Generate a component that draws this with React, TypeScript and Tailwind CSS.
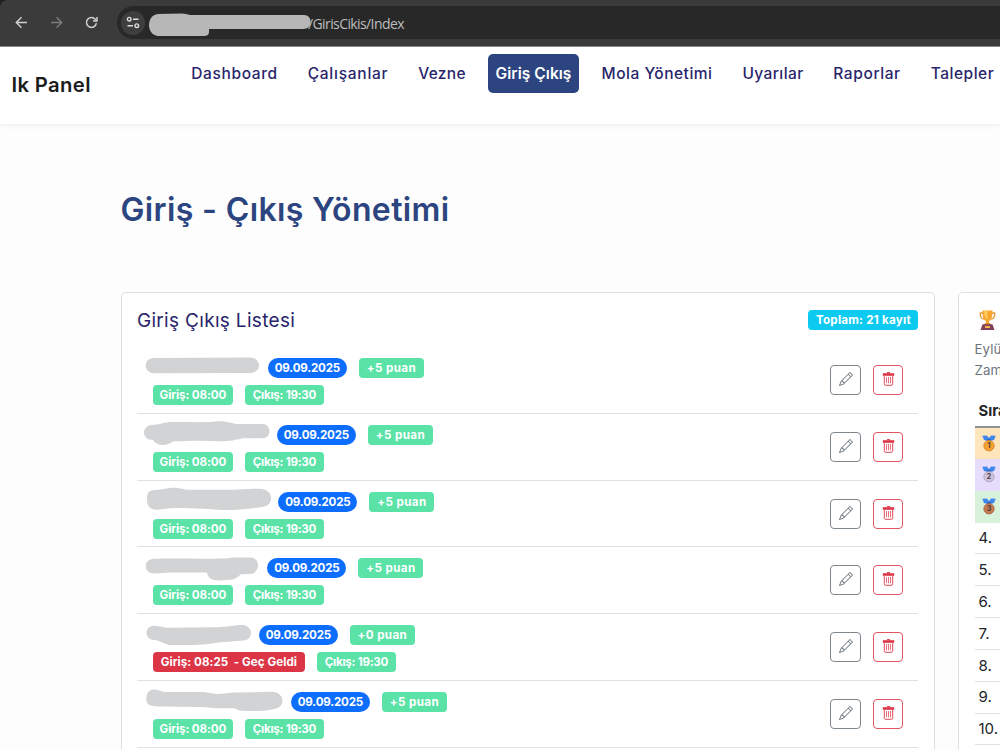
import React from "react";
import { BsPencil } from "react-icons/bs";

type Entry = {
  blob: string;
  nameWidth: string;
  points: string;
  late?: boolean;
};

const navItems = [
  { label: "Dashboard", cls: "w-[102px] tracking-[0.65px]" },
  { label: "Çalışanlar", cls: "w-[96px] tracking-[0.75px]" },
  { label: "Vezne", cls: "w-[63px] tracking-[0.3px]" },
  { label: "Giriş Çıkış", cls: "w-[91px] bg-[#2c4580] text-white !font-semibold tracking-[0.05px]", active: true },
  { label: "Mola Yönetimi", cls: "w-[127px] tracking-[0.5px]" },
  { label: "Uyarılar", cls: "w-[76px] tracking-[0.4px]" },
  { label: "Raporlar", cls: "w-[83px] tracking-[0.6px]" },
  { label: "Talepler", cls: "w-[79px] tracking-[0.5px]" },
];

const entries: Entry[] = [
  {
    nameWidth: "w-[131px]",
    points: "+5 puan",
    blob: "M17 4 L113 3.5 C125 3.5 125 19 113 19 L17 19.2 C6 19.2 6 4 17 4Z",
  },
  {
    nameWidth: "w-[140px]",
    points: "+5 puan",
    blob: "M16 4.7 C24 5 26 2 36 2 C50 1.5 66 3 80 1.3 C91 1 95 4 100 4 L125 4 C135 4 135 18.3 125 18.3 L106 18.3 C95 21 89 21.3 83 21.3 C65 20 50 21 36 21.3 C29 27 20 26 16 20 C4 20 4 5 16 4.7Z",
  },
  {
    nameWidth: "w-[141.5px]",
    points: "+5 puan",
    blob: "M18 3 C26 3 30 .8 38 .8 C44 1 46 2.7 52 2.7 L93 2.7 C104 2.5 110 1.7 123 1.7 C137 2 138 19 125 20 C116 21 106 23 93 23 C82 23.3 75 21.7 66 21.7 C50 21.7 40 20 27 22 C15 24 10 22 10 12 C10 6 12 3 18 3Z",
  },
  {
    nameWidth: "w-[130.5px]",
    points: "+5 puan",
    blob: "M17 4.8 C35 4 70 5 89 4.5 Q94 3.4 99 3.4 L114 3.4 C123 4 124 19 113 20 L104 20.3 C98 25.5 96 25.8 90 25.9 C80 27 71 27 70 18.6 L34 18.4 L17 19.4 C6 19.4 6 5 17 4.8Z",
  },
  {
    nameWidth: "w-[122px]",
    points: "+0 puan",
    late: true,
    blob: "M17 4.7 C24 5 26 6.7 32 6.7 L80 6.3 C90 6 97 4 106 4 C116 5 117 18 107 19.6 C96 20.5 86 21 76 22.2 C65 24.5 45 24 33 24 C26 23 23 19.5 17 19 C7 18 7 5 17 4.7Z",
  },
  {
    nameWidth: "w-[154px]",
    points: "+5 puan",
    blob: "M17 2.5 C22 2.5 24 5 29 5 L63 5 C72 5 75 7 82 7 C88 7 90 5.6 99 5.6 L135 4.8 C147 5 149 19 139 21.5 C128 25 116 24 104 23.8 C100 23 100 21.5 94 21.3 C76 21.7 72 20 62 20 L25 19.4 C10 20 9 16 9.5 10 C10 5 13 2.5 17 2.5Z",
  },
];

function BrowserBar() {
  return (
    <div className="flex h-[46.5px] shrink-0 border-b border-[#868686] bg-[#202020]">
      <div className="flex h-full w-full items-center rounded-tl-[8px] bg-[#3b3b3b]">
        <svg className="ml-[15px] h-[13px] w-[13px] shrink-0" viewBox="0 0 13 13" fill="none" stroke="#d0d0d0" strokeWidth="1.4">
          <path d="M12 6.5H1.5M6.5 1.3 1.3 6.5l5.2 5.2" />
        </svg>
        <svg className="ml-[22px] h-[13px] w-[13px] shrink-0" viewBox="0 0 13 13" fill="none" stroke="#7d7d7d" strokeWidth="1.4">
          <path d="M1 6.5h10.5M6.5 1.3l5.2 5.2-5.2 5.2" />
        </svg>
        <svg className="ml-[21.5px] h-[13px] w-[13px] shrink-0" viewBox="0 0 13 13" fill="none" stroke="#d0d0d0" strokeWidth="1.5">
          <path d="M11.4 7.2A5 5 0 1 1 10.3 3.2L11.5 4.5" />
          <path d="M12 1v4H8" />
        </svg>
        <div className="ml-[19px] flex h-[33px] flex-1 items-center rounded-l-full bg-[#282828] pl-[4px]">
          <span className="flex h-[24px] w-[24px] shrink-0 items-center justify-center rounded-full bg-[#3e3e3e]">
            <svg className="h-[13px] w-[14px]" viewBox="0 0 14 13" fill="none" stroke="#dcdcdc" strokeWidth="1.4">
              <circle cx="3.2" cy="3.2" r="1.8" />
              <path d="M7 3.2h5.5M1.5 9.7H7" />
              <circle cx="10.8" cy="9.7" r="1.8" />
            </svg>
          </span>
          <svg className="ml-[3.5px] mt-[4px] h-[24px] w-[163px] shrink-0" viewBox="0 0 163 24">
            <path d="M10 1 L34 .5 Q38 .5 42 2 L156 2 C165 2 165 16 155 16 L61 16 V19 Q61 23 56 23 L10 23 C-2 22 -2 2 10 1Z" fill="#b7b7b7" />
          </svg>
          <span className="ml-[-3px] mt-[1px] whitespace-nowrap font-['Open_Sans','Noto_Sans',sans-serif] text-[14px] tracking-[-0.6px] text-[#bdbdbd]">
            /GirisCikis/Index
          </span>
        </div>
      </div>
    </div>
  );
}

function Badge({ className, children }: { className: string; children: React.ReactNode }) {
  return (
    <span className={`flex h-[20px] shrink-0 items-center justify-center whitespace-pre pt-[1.5px] text-[11.6px] font-bold leading-none text-white ${className}`}>
      {children}
    </span>
  );
}

function TrashIcon() {
  return (
    <svg className="mb-[2px] h-[14px] w-[13px]" viewBox="0 0 13 14" fill="none" stroke="#dc3545">
      <path d="M.8 2.5h11.4" strokeWidth="2.6" />
      <path d="M5 .7h3" strokeWidth="1.2" />
      <path d="M2.3 4v7.7q0 1.6 1.5 1.6h5.4q1.5 0 1.5-1.6V4" strokeWidth="0.9" />
      <path d="M4.5 5v6.3M6.5 5v6.3M8.5 5v6.3" strokeWidth="0.7" />
    </svg>
  );
}

function EntryRow({ entry }: { entry: Entry }) {
  return (
    <li className="flex h-[66.8px] justify-between border-b border-[#dfe1e4] pr-[15px]">
      <div className="pt-[6.5px]">
        <div className="flex h-[29px] items-center">
          <svg className={`h-[29px] shrink-0 ${entry.nameWidth}`}>
            <path d={entry.blob} fill="#d1d3d4" />
          </svg>
          <Badge className="w-[79px] rounded-full bg-[#0d6efd] tracking-[-0.2px]">09.09.2025</Badge>
          <Badge className="ml-[12px] w-[65px] rounded-[4px] bg-[#5be2a7] tracking-[0.4px]">{entry.points}</Badge>
        </div>
        <div className="mt-[2.5px] flex pl-[16px]">
          {entry.late ? (
            <Badge className="w-[152px] rounded-[4px] bg-[#dc3545] tracking-[0.05px]">{"Giriş: 08:25  - Geç Geldi"}</Badge>
          ) : (
            <Badge className="w-[80px] rounded-[4px] bg-[#5be2a7] tracking-[-0.1px]">Giriş: 08:00</Badge>
          )}
          <Badge className="ml-[12px] w-[79px] rounded-[4px] bg-[#5be2a7] tracking-[-0.25px]">Çıkış: 19:30</Badge>
        </div>
      </div>
      <div className="flex gap-[12px] pt-[18px]">
        <button className="flex h-[30px] w-[31px] items-center justify-center rounded-[4px] border border-[#7f878e] text-[#6c757d]">
          <BsPencil size={14} className="mb-[2px]" />
        </button>
        <button className="flex h-[30px] w-[30px] items-center justify-center rounded-[4px] border border-[#e25563]">
          <TrashIcon />
        </button>
      </div>
    </li>
  );
}

function Trophy() {
  return (
    <svg className="ml-[4.5px] h-[20px] w-[17px]" viewBox="0 0 17 20">
      <path d="M4 3H1.2c0 4 1.3 6 4 6.2M13 3h2.8c0 4-1.3 6-4 6.2" fill="none" stroke="#e69a3b" strokeWidth="1.3" />
      <path d="M3.5.5h10c.3 5-.8 9.3-3.6 10.7L10 14H7l.1-2.8C4.3 9.8 3.2 5.5 3.5.5Z" fill="#f7a72f" />
      <path d="M5 1h3.5v8.5C6 8 5 5 5 1Z" fill="#ffc95c" />
      <path d="M6 13h5l1 2H5Z" fill="#e38b2c" />
      <path d="M3.5 14.3h10L15.5 20h-14Z" fill="#80405c" />
      <path d="M6 16h5v2H6Z" fill="#f5b34c" />
    </svg>
  );
}

function Medal({ place, fill, ring }: { place: number; fill: string; ring: string }) {
  return (
    <svg className="h-[17px] w-[14px]" viewBox="0 0 14 17">
      <path d="M.3.8 4.8.5 7 3 9.2.5 13.7.8 12 5 8.5 6h-3L2 5Z" fill="#3f86ee" />
      <path d="M5.2 4h3.6v2H5.2Z" fill="#2766c8" />
      <circle cx="7" cy="10.7" r="5.2" fill={fill} stroke={ring} strokeWidth="0.8" />
      <text x="7" y="13.3" textAnchor="middle" fontSize="7" fontWeight="700" fill="#4a3540" fontFamily="Inter, sans-serif">
        {place}
      </text>
    </svg>
  );
}

function Ranking() {
  return (
    <aside className="h-[600px] w-[330px] shrink-0 rounded-[5px] border border-[#dfe0e1] bg-white pl-[15.5px] pt-[17px]">
      <Trophy />
      <p className="mt-[9px] w-[60px] text-[13.3px] leading-[20.5px] tracking-[0.1px] text-[#6c757d]">
        Eylül
        <br />
        Zaman
      </p>
      <div className="mt-[15px] flex h-[32.5px] items-center border-b-2 border-[#929292] pl-[4px] pt-[2px] text-[14.8px] font-bold text-[#212529]">
        Sıra
      </div>
      <div className="flex h-[31px] items-center bg-[#ffe5bb] pl-[7.5px]">
        <Medal place={1} fill="#f5a12f" ring="#d9822b" />
      </div>
      <div className="flex h-[32px] items-center bg-[#e6dcfc] pl-[7.5px]">
        <Medal place={2} fill="#cfc3dc" ring="#ac9fbd" />
      </div>
      <div className="flex h-[32px] items-center bg-[#d8f1db] pl-[7.5px]">
        <Medal place={3} fill="#c47b50" ring="#a8613f" />
      </div>
      {[4, 5, 6, 7, 8, 9, 10].map((n) => (
        <div key={n} className="flex h-[31.85px] items-center border-b border-[#dfe1e4] pl-[4px] pt-[1px] text-[15px] text-[#212529]">
          {n}.
        </div>
      ))}
    </aside>
  );
}

export default function App() {
  return (
    <div className="flex h-[750px] w-[1000px] flex-col overflow-hidden bg-[#fdfdfd] font-[Inter,'Liberation_Sans',sans-serif]">
      <BrowserBar />
      <header className="flex h-[77px] shrink-0 bg-white shadow-[0_2px_5px_rgba(0,0,0,0.05)]">
        <div className="w-[183.5px] shrink-0 whitespace-nowrap pl-[11.5px] pt-[23.5px] text-[20.3px] font-semibold leading-[30px] tracking-[0.35px] text-[#1c1c1c]">
          Ik Panel
        </div>
        <nav className="flex shrink-0 gap-[14.5px] pt-[7.5px]">
          {navItems.map((item) => (
            <a
              key={item.label}
              className={`flex h-[39px] shrink-0 items-center justify-center whitespace-nowrap rounded-[5px] pt-[1px] text-[15.5px] font-medium ${item.active ? "" : "text-[#29256b]"} ${item.cls}`}
            >
              {item.label}
            </a>
          ))}
        </nav>
      </header>
      <main className="pl-[121px] pt-[62px]">
        <h1 className="ml-[-0.5px] h-[48px] whitespace-nowrap text-[32px] font-semibold leading-[48px] tracking-[0.36px] text-[#2c4580]">
          Giriş - Çıkış Yönetimi
        </h1>
        <div className="mt-[58.5px] flex w-[1200px] gap-[23px]">
          <section className="h-[600px] w-[814px] shrink-0 rounded-[5px] border border-[#dfe0e1] bg-white pl-[14.9px] pr-[15.6px]">
            <div className="flex h-[54px] items-center justify-between">
              <h2 className="pt-[2px] text-[19px] tracking-[0.32px] text-[#29256b]">Giriş Çıkış Listesi</h2>
              <Badge className="w-[110px] rounded-[4px] bg-[#0dcaf0] tracking-[0.25px]">Toplam: 21 kayıt</Badge>
            </div>
            <ul>
              {entries.map((entry, i) => (
                <EntryRow key={i} entry={entry} />
              ))}
            </ul>
          </section>
          <Ranking />
        </div>
      </main>
    </div>
  );
}
